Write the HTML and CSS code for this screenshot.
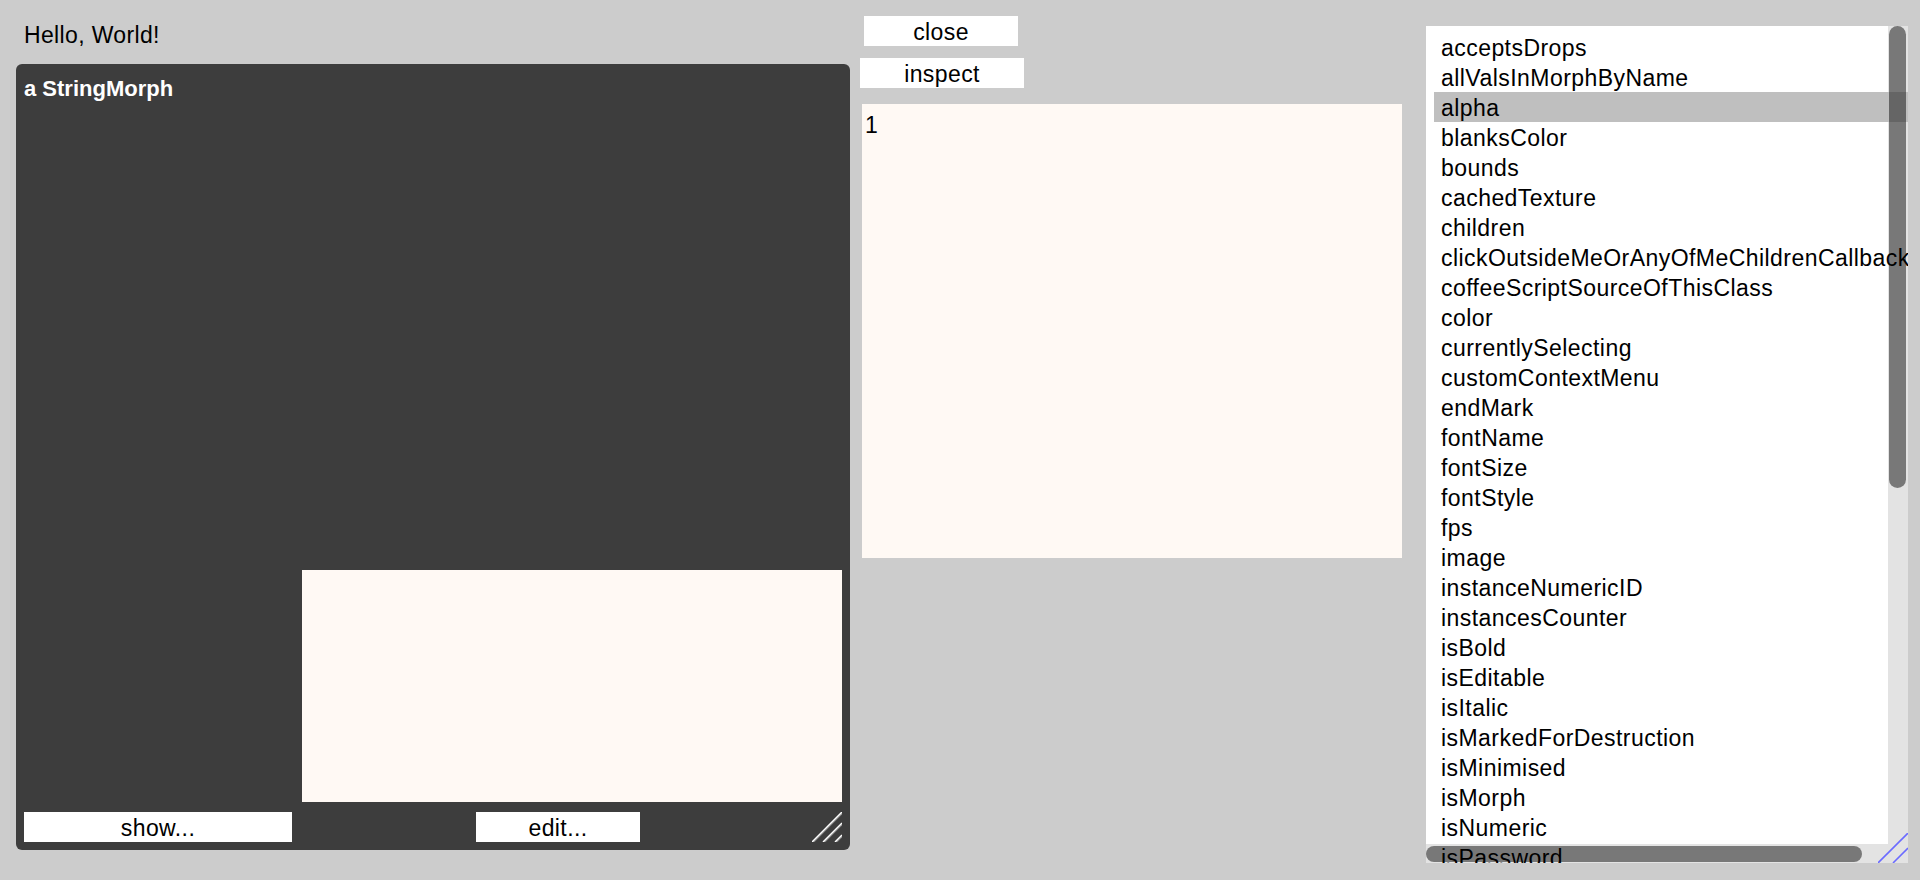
FILE: index.html
```html
<!DOCTYPE html>
<html>
<head>
<meta charset="utf-8">
<title>Inspector</title>
<link rel="stylesheet" href="styles.css">
</head>
<body>
<div class="desk">
  <section class="col-left">
    <div class="hello">Hello, World!</div>
    <div class="inspector">
      <div class="title">a StringMorph</div>
      <div class="inspector-body"><div class="cream"></div></div>
      <div class="btn-row">
        <div class="btn btn-show">show...</div>
        <div class="btn btn-edit">edit...</div>
        <svg class="grip" viewBox="0 0 30 30">
          <g stroke-width="1.5" stroke-linecap="butt">
            <line x1="1.5" y1="30" x2="31.5" y2="0" stroke="#8a8a8a"/>
            <line x1="0" y1="30" x2="30" y2="0" stroke="#ffffff"/>
            <line x1="12.5" y1="30" x2="31.5" y2="11" stroke="#8a8a8a"/>
            <line x1="11" y1="30" x2="30" y2="11" stroke="#ffffff"/>
            <line x1="24.5" y1="30" x2="31.5" y2="23" stroke="#8a8a8a"/>
            <line x1="23" y1="30" x2="30" y2="23" stroke="#ffffff"/>
          </g>
        </svg>
      </div>
    </div>
  </section>

  <section class="col-mid">
    <div class="btn btn-close">close</div>
    <div class="btn btn-inspect">inspect</div>
    <div class="text-pane">1</div>
  </section>

  <section class="col-right">
    <div class="list">
      <ul class="items">
        <li>acceptsDrops</li>
        <li>allValsInMorphByName</li>
        <li class="sel">alpha</li>
        <li>blanksColor</li>
        <li>bounds</li>
        <li>cachedTexture</li>
        <li>children</li>
        <li>clickOutsideMeOrAnyOfMeChildrenCallback</li>
        <li>coffeeScriptSourceOfThisClass</li>
        <li>color</li>
        <li>currentlySelecting</li>
        <li>customContextMenu</li>
        <li>endMark</li>
        <li>fontName</li>
        <li>fontSize</li>
        <li>fontStyle</li>
        <li>fps</li>
        <li>image</li>
        <li>instanceNumericID</li>
        <li>instancesCounter</li>
        <li>isBold</li>
        <li>isEditable</li>
        <li>isItalic</li>
        <li>isMarkedForDestruction</li>
        <li>isMinimised</li>
        <li>isMorph</li>
        <li>isNumeric</li>
        <li>isPassword</li>
      </ul>
      <div class="vthumb"></div>
      <div class="hthumb"></div>
      <svg class="list-grip" viewBox="0 0 30 30">
        <g stroke="#6b6bff" stroke-width="1.6">
          <line x1="0" y1="30" x2="30" y2="0"/>
          <line x1="15" y1="30" x2="30" y2="15"/>
        </g>
      </svg>
    </div>
  </section>
</div>
</body>
</html>
```

FILE: styles.css
```css
html, body {
  margin: 0;
  padding: 0;
  background: #cccccc;
}

body {
  width: 1920px;
  height: 880px;
  overflow: hidden;
  font-family: "Liberation Sans", Arial, Helvetica, sans-serif;
  font-size: 23px;
  line-height: 30px;
  color: #000;
}

.desk {
  display: flex;
  align-items: flex-start;
  height: 880px;
}

/* left column */
.col-left {
  margin-left: 16px;
  width: 834px;
  display: flex;
  flex-direction: column;
}

.hello {
  margin-top: 20px;
  height: 30px;
  padding-left: 8px;
  letter-spacing: 0.35px;
}

.inspector {
  margin-top: 14px;
  height: 786px;
  box-sizing: border-box;
  padding: 9px 8px 8px 8px;
  background: #3d3d3d;
  border-radius: 6px;
  display: flex;
  flex-direction: column;
}

.title {
  height: 30px;
  color: #ffffff;
  font-size: 22px;
  line-height: 31px;
  font-weight: bold;
}

.inspector-body {
  flex: 1;
  display: flex;
  align-items: flex-end;
  justify-content: flex-end;
  padding-bottom: 10px;
}

.cream {
  width: 540px;
  height: 232px;
  background: #fff9f4;
}

.btn-row {
  display: flex;
  height: 30px;
}

.btn {
  height: 30px;
  line-height: 32px;
  background: #ffffff;
  text-align: center;
  letter-spacing: 0.4px;
  white-space: nowrap;
  overflow: hidden;
}

.btn-show {
  width: 268px;
}

.btn-edit {
  width: 164px;
  margin-left: 184px;
}

.grip {
  margin-left: auto;
  width: 30px;
  height: 30px;
  display: block;
}

/* middle column */
.col-mid {
  margin-left: 10px;
  width: 542px;
  display: flex;
  flex-direction: column;
  align-items: flex-start;
}

.btn-close {
  margin-top: 16px;
  margin-left: 4px;
  width: 154px;
}

.btn-inspect {
  margin-top: 12px;
  width: 164px;
}

.text-pane {
  margin-top: 16px;
  margin-left: 2px;
  width: 540px;
  height: 454px;
  box-sizing: border-box;
  padding: 6px 0 0 3px;
  line-height: 31px;
  background: #fff9f4;
}

/* right column */
.col-right {
  margin-left: 24px;
  margin-top: 26px;
}

.list {
  position: relative;
  width: 482px;
  height: 837px;
  overflow: hidden;
  background:
    linear-gradient(#ffffff, #ffffff) top left / 462px 818px no-repeat,
    #e3e3e3;
}

.items {
  list-style: none;
  margin: 0;
  padding: 6px 0 0 8px;
}

.items li {
  height: 30px;
  line-height: 32px;
  padding-left: 7px;
  white-space: nowrap;
  letter-spacing: 0.45px;
}

.items li.sel {
  background: #bfbfbf;
}

.vthumb {
  position: absolute;
  left: 463px;
  top: 0;
  width: 17px;
  height: 462px;
  border-radius: 8.5px;
  background: rgba(0, 0, 0, 0.47);
}

.hthumb {
  position: absolute;
  left: 0;
  top: 820px;
  width: 436px;
  height: 16px;
  border-radius: 8px;
  background: rgba(0, 0, 0, 0.47);
}

.list-grip {
  position: absolute;
  right: 0;
  bottom: 0;
  width: 30px;
  height: 30px;
}
```
